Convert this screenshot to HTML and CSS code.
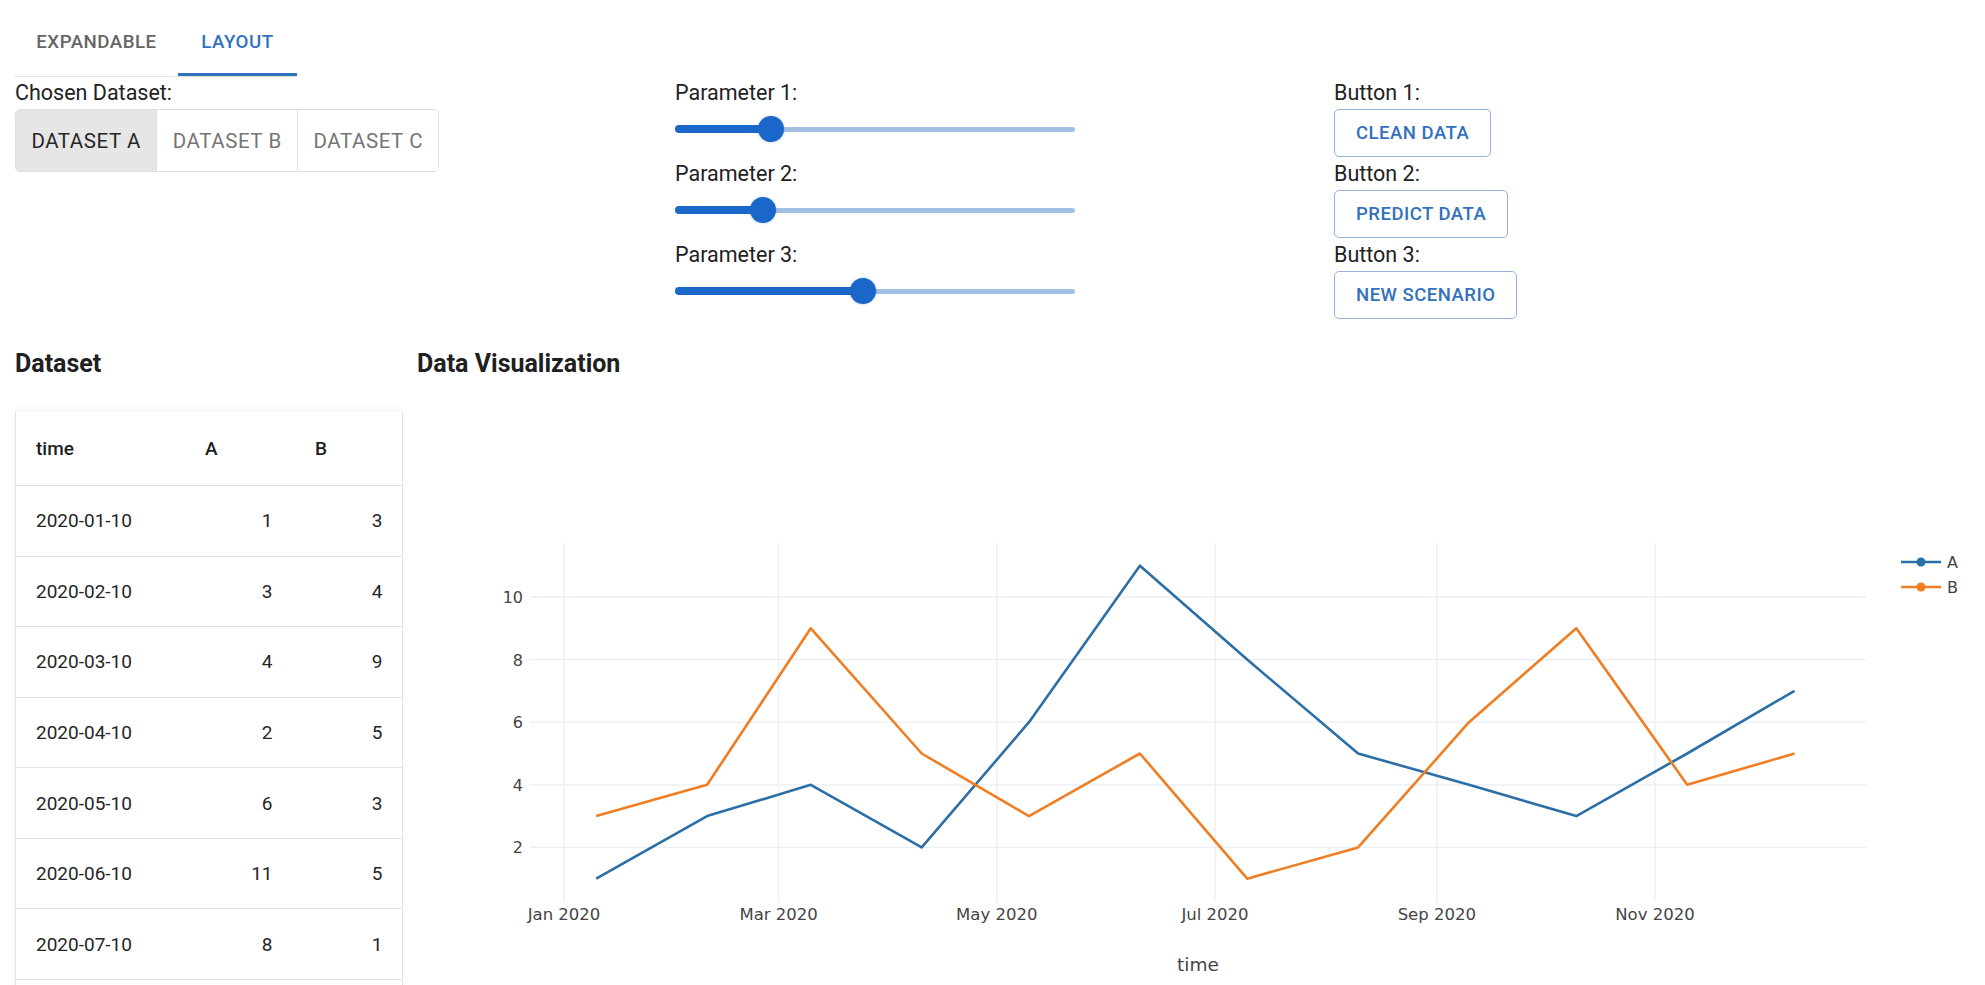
FILE: index.html
```html
<!DOCTYPE html>
<html lang="en">
<head>
<meta charset="utf-8">
<title>Layout</title>
<link rel="stylesheet" href="styles.css">
</head>
<body>
<div class="page">
  <div class="tabs">
    <div class="tab tab-first">EXPANDABLE</div>
    <div class="tab tab-second tab-active">LAYOUT</div>
  </div>

  <div class="controls">
    <div class="col">
      <div class="label">Chosen Dataset:</div>
      <div class="toggle-group">
        <button class="toggle toggle-selected">DATASET A</button>
        <button class="toggle">DATASET B</button>
        <button class="toggle">DATASET C</button>
      </div>
    </div>

    <div class="col">
      <div class="param">
        <div class="label">Parameter 1:</div>
        <div class="slider">
          <div class="rail"></div>
          <div class="track" style="width:24%"></div>
          <div class="thumb" style="left:24%"></div>
        </div>
      </div>
      <div class="param">
        <div class="label">Parameter 2:</div>
        <div class="slider">
          <div class="rail"></div>
          <div class="track" style="width:22%"></div>
          <div class="thumb" style="left:22%"></div>
        </div>
      </div>
      <div class="param">
        <div class="label">Parameter 3:</div>
        <div class="slider">
          <div class="rail"></div>
          <div class="track" style="width:47%"></div>
          <div class="thumb" style="left:47%"></div>
        </div>
      </div>
    </div>

    <div class="col">
      <div class="btn-block">
        <div class="label">Button 1:</div>
        <button class="obtn">CLEAN DATA</button>
      </div>
      <div class="btn-block">
        <div class="label">Button 2:</div>
        <button class="obtn">PREDICT DATA</button>
      </div>
      <div class="btn-block">
        <div class="label">Button 3:</div>
        <button class="obtn">NEW SCENARIO</button>
      </div>
    </div>
  </div>

  <div class="content">
    <section class="data-col">
      <h2 class="heading">Dataset</h2>
      <div class="grid-card">
        <div class="grid-row grid-head">
          <div class="cell cell-time">time</div>
          <div class="cell cell-a">A</div>
          <div class="cell cell-b">B</div>
        </div>
        <div class="grid-row"><div class="cell cell-time">2020-01-10</div><div class="cell cell-a num">1</div><div class="cell cell-b num">3</div></div>
        <div class="grid-row"><div class="cell cell-time">2020-02-10</div><div class="cell cell-a num">3</div><div class="cell cell-b num">4</div></div>
        <div class="grid-row"><div class="cell cell-time">2020-03-10</div><div class="cell cell-a num">4</div><div class="cell cell-b num">9</div></div>
        <div class="grid-row"><div class="cell cell-time">2020-04-10</div><div class="cell cell-a num">2</div><div class="cell cell-b num">5</div></div>
        <div class="grid-row"><div class="cell cell-time">2020-05-10</div><div class="cell cell-a num">6</div><div class="cell cell-b num">3</div></div>
        <div class="grid-row"><div class="cell cell-time">2020-06-10</div><div class="cell cell-a num">11</div><div class="cell cell-b num">5</div></div>
        <div class="grid-row"><div class="cell cell-time">2020-07-10</div><div class="cell cell-a num">8</div><div class="cell cell-b num">1</div></div>
      </div>
    </section>

    <section class="viz-col">
      <h2 class="heading">Data Visualization</h2>
      <svg class="chart" width="1553" height="573" viewBox="417 412 1553 573" xmlns="http://www.w3.org/2000/svg">
        <g class="grid">
          <line x1="530" y1="847.4" x2="1866" y2="847.4"/>
          <line x1="530" y1="784.8" x2="1866" y2="784.8"/>
          <line x1="530" y1="722.2" x2="1866" y2="722.2"/>
          <line x1="530" y1="659.6" x2="1866" y2="659.6"/>
          <line x1="530" y1="597" x2="1866" y2="597"/>
          <line x1="564" y1="543" x2="564" y2="902"/>
          <line x1="778.6" y1="543" x2="778.6" y2="902"/>
          <line x1="996.8" y1="543" x2="996.8" y2="902"/>
          <line x1="1215" y1="543" x2="1215" y2="902"/>
          <line x1="1436.8" y1="543" x2="1436.8" y2="902"/>
          <line x1="1655" y1="543" x2="1655" y2="902"/>
        </g>
        <g class="ytick">
          <text x="523" y="603">10</text>
          <text x="523" y="665.6">8</text>
          <text x="523" y="728.2">6</text>
          <text x="523" y="790.8">4</text>
          <text x="523" y="853.4">2</text>
        </g>
        <g class="xtick">
          <text x="564" y="920">Jan 2020</text>
          <text x="778.6" y="920">Mar 2020</text>
          <text x="996.8" y="920">May 2020</text>
          <text x="1215" y="920">Jul 2020</text>
          <text x="1436.8" y="920">Sep 2020</text>
          <text x="1655" y="920">Nov 2020</text>
        </g>
        <text class="xtitle" x="1198" y="971">time</text>
        <polyline class="series-a" points="596.2,878.7 707.1,816.1 810.8,784.8 921.7,847.4 1029,722.2 1139.9,565.7 1247.2,659.6 1358.1,753.5 1469,784.8 1576.3,816.1 1687.2,753.5 1794.5,690.9"/>
        <polyline class="series-b" points="596.2,816.1 707.1,784.8 810.8,628.3 921.7,753.5 1029,816.1 1139.9,753.5 1247.2,878.7 1358.1,847.4 1469,722.2 1576.3,628.3 1687.2,784.8 1794.5,753.5"/>
        <g class="legend">
          <line class="leg-a" x1="1901" y1="562" x2="1941" y2="562"/>
          <circle class="dot-a" cx="1921" cy="562" r="4.5"/>
          <text x="1947" y="568">A</text>
          <line class="leg-b" x1="1901" y1="587" x2="1941" y2="587"/>
          <circle class="dot-b" cx="1921" cy="587" r="4.5"/>
          <text x="1947" y="593">B</text>
        </g>
      </svg>
    </section>
  </div>
</div>
</body>
</html>
```

FILE: styles.css
```css
html, body {
  margin: 0;
  padding: 0;
  background: #ffffff;
}

body {
  font-family: Roboto, "Liberation Sans", sans-serif;
  color: #212121;
}

.page {
  height: 100vh;
  overflow: hidden;
  padding: 0 15px;
  box-sizing: border-box;
}

/* Tabs */
.tabs {
  display: flex;
  margin-top: 14px;
  width: fit-content;
  border-bottom: 1px solid #e3e3e3;
}

.tab {
  height: 62px;
  padding-bottom: 6px;
  display: flex;
  align-items: center;
  justify-content: center;
  font-size: 18.7px;
  font-weight: 500;
  letter-spacing: 0.5px;
  color: #666666;
  box-sizing: border-box;
}

.tab-first { width: 163px; }
.tab-second { width: 119px; }

.tab-active {
  color: #2f73be;
  box-shadow: inset 0 -3px 0 #2f73be;
}

/* Controls */
.controls {
  display: grid;
  grid-template-columns: 660px 659px 1fr;
  margin-top: 4px;
}

.label {
  font-size: 21.5px;
  line-height: 24px;
  color: #222222;
}

.toggle-group {
  display: inline-flex;
  margin-top: 4px;
  border: 1px solid #dedede;
  border-radius: 5px;
  overflow: hidden;
}

.toggle {
  height: 61px;
  padding: 0 15.4px;
  border: none;
  border-left: 1px solid #dedede;
  background: #ffffff;
  font-family: Roboto, "Liberation Sans", sans-serif;
  font-size: 20.5px;
  font-weight: 400;
  letter-spacing: 0.57px;
  color: #757575;
}

.toggle:first-child { border-left: none; }

.toggle-selected {
  background: #e6e6e6;
  color: #262626;
}

.param {
  margin-bottom: 9px;
}

.param:last-child { margin-bottom: 0; }

.slider {
  position: relative;
  width: 400px;
  height: 48px;
  display: flex;
  align-items: center;
}

.rail {
  width: 100%;
  height: 5px;
  border-radius: 3px;
  background: #a3bfe4;
}

.track {
  position: absolute;
  left: 0;
  top: 20px;
  height: 8px;
  border-radius: 4px;
  background: #1b66c9;
}

.thumb {
  position: absolute;
  top: 11px;
  width: 26px;
  height: 26px;
  margin-left: -13px;
  border-radius: 50%;
  background: #1b66c9;
  box-shadow: 0 0 3px rgba(27, 102, 201, 0.35);
}

.btn-block {
  margin-bottom: 5px;
}

.btn-block:last-child { margin-bottom: 0; }

.obtn {
  display: block;
  margin-top: 4px;
  height: 48px;
  padding: 0 21px;
  border: 1px solid #93b3dc;
  border-radius: 5px;
  background: #ffffff;
  font-family: Roboto, "Liberation Sans", sans-serif;
  font-size: 18.5px;
  font-weight: 500;
  letter-spacing: 0.5px;
  color: #3271bd;
}

/* Content */
.content {
  display: grid;
  grid-template-columns: 388px 1fr;
  column-gap: 14px;
  margin-top: 30px;
}

.heading {
  margin: 0;
  font-size: 25px;
  line-height: 30px;
  font-weight: 700;
  color: #202020;
}

.grid-card {
  height: 640px;
  margin-top: 33px;
  border: 1px solid #e4e4e4;
  border-top: none;
  box-shadow: 0 -3px 6px rgba(0, 0, 0, 0.04);
}

.grid-row {
  display: grid;
  grid-template-columns: 168px 110px 108px;
  height: 70.57px;
  box-sizing: border-box;
  border-bottom: 1px solid #e2e2e2;
  align-items: center;
  font-size: 19px;
  color: #262626;
}

.grid-head {
  height: 74px;
  font-weight: 500;
  color: #1e1e1e;
}

.cell-time { padding-left: 20px; }
.cell-a { padding-left: 21px; }
.cell-b { padding-left: 21px; }
.cell-a.num { padding-left: 0; padding-right: 21.5px; text-align: right; }
.cell-b.num { padding-left: 0; padding-right: 19.5px; text-align: right; }

/* Chart */
.chart {
  display: block;
  margin-top: 33px;
  overflow: visible;
}

.grid line {
  stroke: #ebeef3;
  stroke-width: 1.3;
}

.ytick text {
  font-family: "DejaVu Sans", sans-serif;
  font-size: 16px;
  fill: #444444;
  text-anchor: end;
}

.xtick text {
  font-family: "DejaVu Sans", sans-serif;
  font-size: 16.5px;
  fill: #444444;
  text-anchor: middle;
}

.xtitle {
  font-family: "DejaVu Sans", sans-serif;
  font-size: 18.5px;
  fill: #444444;
  text-anchor: middle;
}

.series-a, .series-b {
  fill: none;
  stroke-width: 2.6;
  stroke-linejoin: round;
}

.series-a { stroke: #2c6fa6; }
.series-b { stroke: #f07d22; }

.leg-a { stroke: #2c6fa6; stroke-width: 2.6; }
.leg-b { stroke: #f07d22; stroke-width: 2.6; }
.dot-a { fill: #2c6fa6; }
.dot-b { fill: #f07d22; }

.legend text {
  font-family: "DejaVu Sans", sans-serif;
  font-size: 16px;
  fill: #444444;
}
```
